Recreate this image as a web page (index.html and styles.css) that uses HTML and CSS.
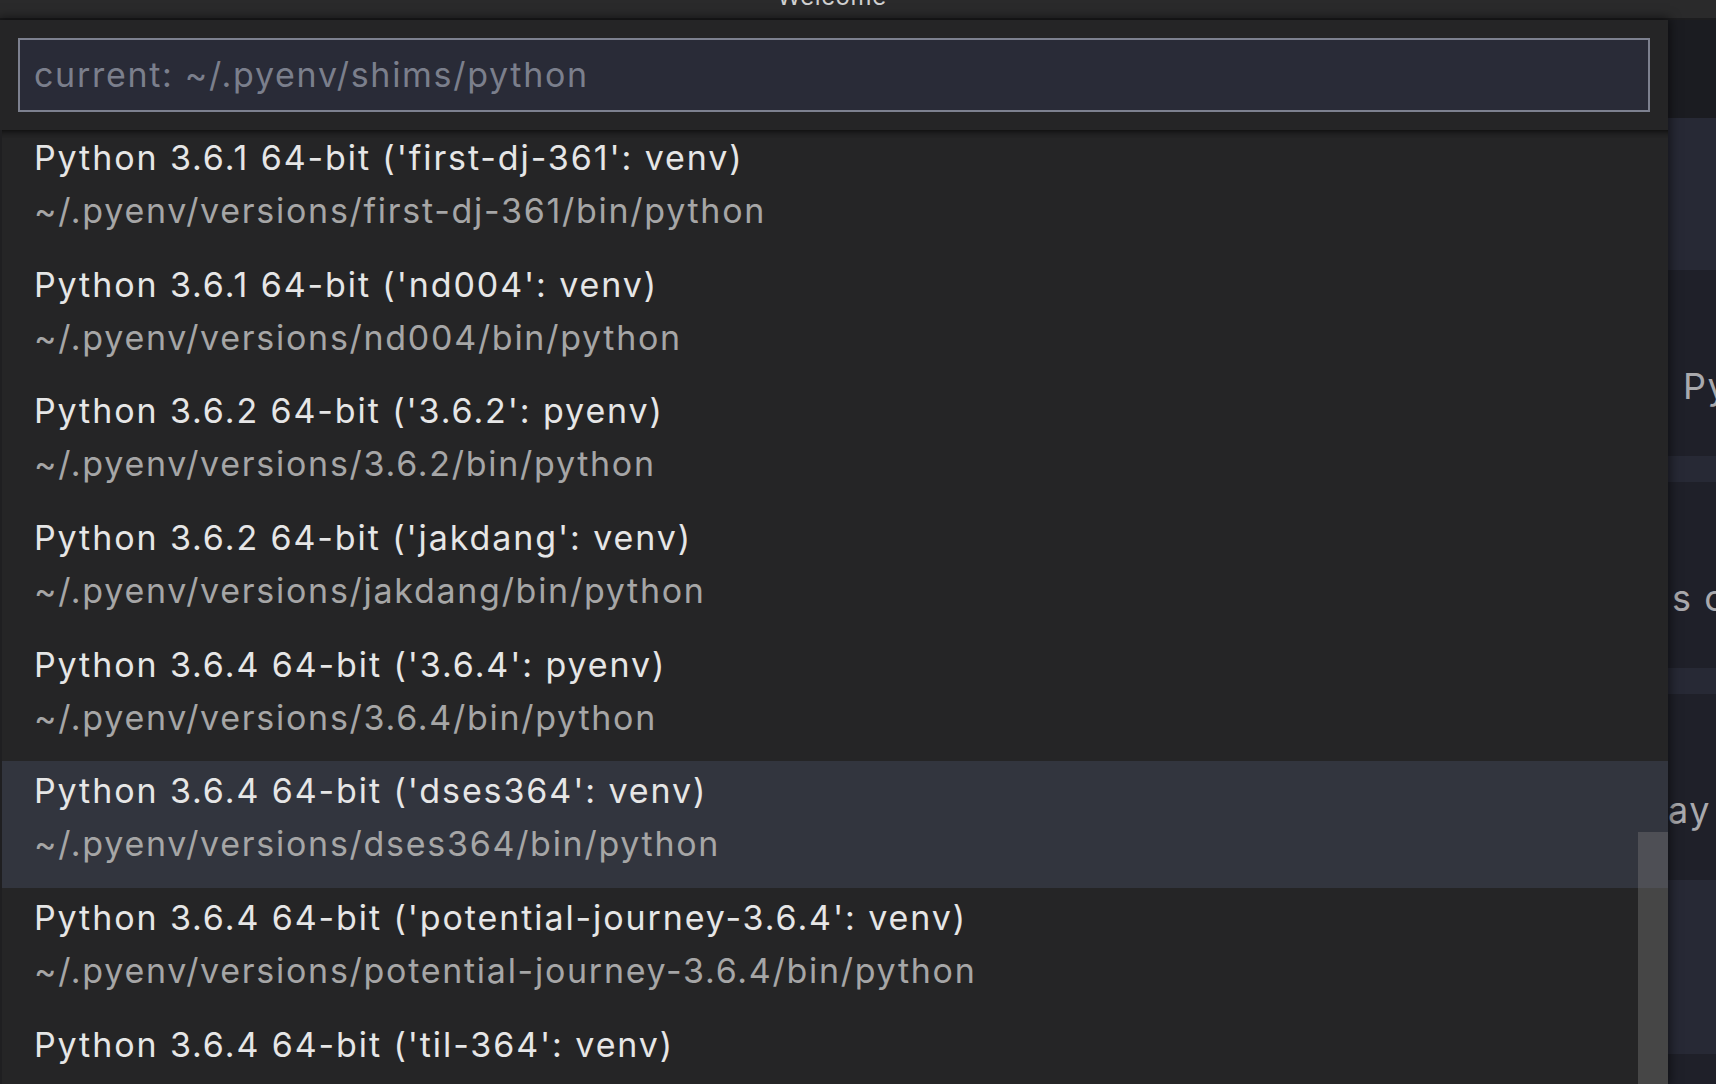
FILE: index.html
```html
<!DOCTYPE html>
<html lang="en">
<head>
<meta charset="utf-8">
<title>Select Interpreter</title>
<link rel="stylesheet" href="styles.css">
</head>
<body>
<div class="app">
  <header class="titlebar"><span class="title">Welcome</span></header>
  <main class="editor">
    <div class="band band-top"></div>
    <div class="band band-light band-h152"></div>
    <div class="band band-dark band-h186 text-row"><span class="ed-text ed-py">Python</span></div>
    <div class="band band-light band-h26"></div>
    <div class="band band-dark band-h186 text-row"><span class="ed-text ed-sc">s c</span></div>
    <div class="band band-light band-h26"></div>
    <div class="band band-dark band-h186 text-row"><span class="ed-text ed-ay">ay</span></div>
    <div class="band band-light band-h174"></div>
    <div class="band band-dark band-rest"></div>
  </main>

  <div class="quickpick">
    <div class="qp-header">
      <div class="qp-input"><span class="placeholder">current: ~/.pyenv/shims/python</span></div>
    </div>
    <div class="qp-list">
      <div class="qp-rows">
        <div class="qp-row">
          <div class="label">Python 3.6.1 64-bit ('first-dj-361': venv)</div>
          <div class="detail">~/.pyenv/versions/first-dj-361/bin/python</div>
        </div>
        <div class="qp-row">
          <div class="label">Python 3.6.1 64-bit ('nd004': venv)</div>
          <div class="detail">~/.pyenv/versions/nd004/bin/python</div>
        </div>
        <div class="qp-row">
          <div class="label">Python 3.6.2 64-bit ('3.6.2': pyenv)</div>
          <div class="detail">~/.pyenv/versions/3.6.2/bin/python</div>
        </div>
        <div class="qp-row">
          <div class="label">Python 3.6.2 64-bit ('jakdang': venv)</div>
          <div class="detail">~/.pyenv/versions/jakdang/bin/python</div>
        </div>
        <div class="qp-row">
          <div class="label">Python 3.6.4 64-bit ('3.6.4': pyenv)</div>
          <div class="detail">~/.pyenv/versions/3.6.4/bin/python</div>
        </div>
        <div class="qp-row is-focused">
          <div class="label">Python 3.6.4 64-bit ('dses364': venv)</div>
          <div class="detail">~/.pyenv/versions/dses364/bin/python</div>
        </div>
        <div class="qp-row">
          <div class="label">Python 3.6.4 64-bit ('potential-journey-3.6.4': venv)</div>
          <div class="detail">~/.pyenv/versions/potential-journey-3.6.4/bin/python</div>
        </div>
        <div class="qp-row">
          <div class="label">Python 3.6.4 64-bit ('til-364': venv)</div>
        </div>
      </div>
      <div class="scroll-shadow"></div>
      <div class="scrollbar"></div>
    </div>
  </div>
</div>
</body>
</html>
```

FILE: styles.css
```css
* { box-sizing: border-box; }

html, body {
  margin: 0;
  padding: 0;
  width: 1716px;
  height: 1084px;
  overflow: hidden;
  background: #1f2029;
  font-family: Inter, "Noto Sans", "Liberation Sans", sans-serif;
}

.app {
  position: relative;
  width: 1716px;
  height: 1084px;
  overflow: hidden;
  display: flex;
  flex-direction: column;
}

/* title bar */
.titlebar {
  height: 20px;
  flex: none;
  background: #2a2a2b;
  border-bottom: 2px solid #1d1d1f;
  display: flex;
  justify-content: center;
  align-items: flex-end;
  overflow: hidden;
}
.title {
  font-size: 24px;
  line-height: 24px;
  color: #cfcfcf;
  letter-spacing: 0.6px;
  margin-bottom: 9px;
  margin-left: -52px;
}

/* editor (welcome page behind the quick pick) */
.editor {
  flex: 1;
  display: flex;
  flex-direction: column;
  overflow: hidden;
}
.band { flex: none; }
.band-top { height: 98px; background: #1b1c21; }
.band-light { background: #272935; }
.band-dark { background: #1f2029; }
.band-h152 { height: 152px; }
.band-h186 { height: 186px; }
.band-h26 { height: 26px; }
.band-h174 { height: 174px; }
.band-rest { flex: 1; }

.text-row {
  display: flex;
  white-space: nowrap;
  overflow: hidden;
}
.ed-text {
  font-size: 36px;
  line-height: 40px;
  color: #a9a9ad;
  letter-spacing: 1.5px;
}
.ed-py { margin: 96px 0 0 1683px; }
.ed-sc { margin: 96px 0 0 1672px; }
.ed-ay { margin: 96px 0 0 1668px; }

/* quick pick overlay */
.quickpick {
  position: absolute;
  top: 20px;
  left: 0;
  width: 1668px;
  bottom: 0;
  background: #252526;
  box-shadow: 0 0 10px 2px rgba(0, 0, 0, 0.55);
  display: flex;
  flex-direction: column;
}

.qp-header {
  flex: none;
  padding: 18px;
  height: 110px;
}
.qp-input {
  height: 74px;
  border: 2px solid #7d818f;
  background: #292b37;
  padding-left: 14px;
  display: flex;
  align-items: center;
}
.placeholder {
  font-size: 34px;
  line-height: 70px;
  color: #7b7f8c;
  letter-spacing: 1.7px;
  white-space: nowrap;
}

.qp-list {
  position: relative;
  flex: 1;
  overflow: hidden;
  border-left: 2px solid #1f1f21;
}
.qp-rows {
  margin-top: -2.5px;
}
.qp-row {
  height: 126.7px;
  padding: 5.4px 0 0 32px;
  white-space: nowrap;
}
.qp-row.is-focused {
  background: #32353e;
}
.label {
  font-size: 34px;
  line-height: 50px;
  color: #e6e6e6;
  letter-spacing: 1.9px;
}
.detail {
  font-size: 34px;
  line-height: 50px;
  margin-top: 3px;
  color: #a6a6a6;
  letter-spacing: 1.72px;
}

.scroll-shadow {
  position: absolute;
  top: 0;
  left: 0;
  right: 0;
  height: 8px;
  box-shadow: inset 0 8px 8px -8px #000;
}

.scrollbar {
  position: absolute;
  right: 0;
  top: 702px;
  width: 30px;
  bottom: 0;
  background: rgba(121, 121, 121, 0.4);
}
```
